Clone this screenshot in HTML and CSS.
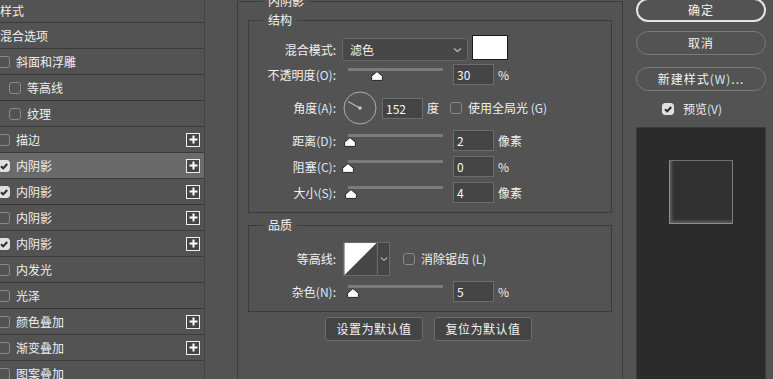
FILE: index.html
```html
<!DOCTYPE html>
<html lang="zh-CN">
<head>
<meta charset="utf-8">
<title>图层样式</title>
<link rel="stylesheet" href="styles.css">
</head>
<body>
<div class="dialog">
  <aside class="sidebar">
    <div class="row first">样式</div>
    <div class="row">混合选项</div>
    <div class="row"><span class="cb"></span>斜面和浮雕</div>
    <div class="row sub"><span class="cb"></span>等高线</div>
    <div class="row sub"><span class="cb"></span>纹理</div>
    <div class="row"><span class="cb"></span>描边<span class="plus"><svg viewBox="0 0 11 11"><path d="M5.5 1.5v8M1.5 5.5h8"/></svg></span></div>
    <div class="row sel"><span class="cb on"><svg viewBox="0 0 10 10"><path d="M2 5.2l2.2 2.2L8.2 3"/></svg></span>内阴影<span class="plus"><svg viewBox="0 0 11 11"><path d="M5.5 1.5v8M1.5 5.5h8"/></svg></span></div>
    <div class="row"><span class="cb on"><svg viewBox="0 0 10 10"><path d="M2 5.2l2.2 2.2L8.2 3"/></svg></span>内阴影<span class="plus"><svg viewBox="0 0 11 11"><path d="M5.5 1.5v8M1.5 5.5h8"/></svg></span></div>
    <div class="row"><span class="cb"></span>内阴影<span class="plus"><svg viewBox="0 0 11 11"><path d="M5.5 1.5v8M1.5 5.5h8"/></svg></span></div>
    <div class="row"><span class="cb on"><svg viewBox="0 0 10 10"><path d="M2 5.2l2.2 2.2L8.2 3"/></svg></span>内阴影<span class="plus"><svg viewBox="0 0 11 11"><path d="M5.5 1.5v8M1.5 5.5h8"/></svg></span></div>
    <div class="row"><span class="cb"></span>内发光</div>
    <div class="row"><span class="cb"></span>光泽</div>
    <div class="row"><span class="cb"></span>颜色叠加<span class="plus"><svg viewBox="0 0 11 11"><path d="M5.5 1.5v8M1.5 5.5h8"/></svg></span></div>
    <div class="row"><span class="cb"></span>渐变叠加<span class="plus"><svg viewBox="0 0 11 11"><path d="M5.5 1.5v8M1.5 5.5h8"/></svg></span></div>
    <div class="row"><span class="cb"></span>图案叠加</div>
  </aside>

  <main class="center">
    <fieldset class="group outer">
      <legend>内阴影</legend>

      <fieldset class="group structure">
        <legend>结构</legend>
        <div class="frow r-blend">
          <label class="lbl">混合模式:</label>
          <div class="select">滤色<svg class="chev" viewBox="0 0 9 6"><path d="M1 1.5l3.5 3 3.5-3"/></svg></div>
          <span class="swatch"></span>
        </div>
        <div class="frow r-opacity">
          <label class="lbl">不透明度<span class="hk">(O)</span>:</label>
          <div class="slider"><div class="track"><span class="thumb" style="left:22.5px"><svg viewBox="0 0 12 10"><path d="M6 0.6L11.4 5.2V9.4H0.6V5.2Z"/></svg></span></div></div>
          <span class="num">30</span><span class="unit">%</span>
        </div>
        <div class="frow r-angle">
          <label class="lbl">角度<span class="hk">(A)</span>:</label>
          <svg class="dial" viewBox="0 0 34 34"><circle cx="17" cy="17" r="16"/><path d="M17 17L5 10.6"/><circle class="dot" cx="17" cy="17" r="1.8"/></svg>
          <span class="num angle-num">152</span><span class="unit">度</span>
          <span class="cb inline"></span><span class="cbtext">使用全局光 <span class="hk">(G)</span></span>
        </div>
        <div class="frow r-slide">
          <label class="lbl">距离<span class="hk">(D)</span>:</label>
          <div class="slider"><div class="track"><span class="thumb" style="left:-4px"><svg viewBox="0 0 12 10"><path d="M6 0.6L11.4 5.2V9.4H0.6V5.2Z"/></svg></span></div></div>
          <span class="num">2</span><span class="unit">像素</span>
        </div>
        <div class="frow r-slide">
          <label class="lbl">阻塞<span class="hk">(C)</span>:</label>
          <div class="slider"><div class="track"><span class="thumb" style="left:-6px"><svg viewBox="0 0 12 10"><path d="M6 0.6L11.4 5.2V9.4H0.6V5.2Z"/></svg></span></div></div>
          <span class="num">0</span><span class="unit">%</span>
        </div>
        <div class="frow r-slide">
          <label class="lbl">大小<span class="hk">(S)</span>:</label>
          <div class="slider"><div class="track"><span class="thumb" style="left:-3px"><svg viewBox="0 0 12 10"><path d="M6 0.6L11.4 5.2V9.4H0.6V5.2Z"/></svg></span></div></div>
          <span class="num">4</span><span class="unit">像素</span>
        </div>
      </fieldset>

      <fieldset class="group quality">
        <legend>品质</legend>
        <div class="frow r-contour">
          <label class="lbl">等高线:</label>
          <div class="contour">
            <svg class="curve" viewBox="0 0 34 34"><rect width="34" height="34" fill="#474747"/><path d="M0 0H34L0 34Z" fill="#ffffff"/></svg>
            <span class="drop"><svg class="chev" viewBox="0 0 9 6"><path d="M1 1.5l3.5 3 3.5-3"/></svg></span>
          </div>
          <span class="cb inline aa"></span><span class="cbtext">消除锯齿 <span class="hk">(L)</span></span>
        </div>
        <div class="frow r-noise">
          <label class="lbl">杂色<span class="hk">(N)</span>:</label>
          <div class="slider"><div class="track"><span class="thumb" style="left:-1.5px"><svg viewBox="0 0 12 10"><path d="M6 0.6L11.4 5.2V9.4H0.6V5.2Z"/></svg></span></div></div>
          <span class="num">5</span><span class="unit">%</span>
        </div>
      </fieldset>

      <div class="defaults">
        <button class="dbtn">设置为默认值</button>
        <button class="dbtn">复位为默认值</button>
      </div>
    </fieldset>
  </main>

  <aside class="actions">
    <button class="pill primary">确定</button>
    <button class="pill">取消</button>
    <button class="pill">新建样式<span class="hk">(W)</span>...</button>
    <div class="preview-toggle"><span class="cb on"><svg viewBox="0 0 10 10"><path d="M2 5.2l2.2 2.2L8.2 3"/></svg></span>预览<span class="hk">(V)</span></div>
    <div class="preview"><div class="sample"></div></div>
  </aside>
</div>
</body>
</html>
```

FILE: styles.css
```css
* { box-sizing: border-box; }
html, body { margin: 0; padding: 0; }
body {
  background: #535353;
  color: #eeeeee;
  font-family: "Noto Sans CJK SC", "Noto Sans", sans-serif;
  font-size: 12px;
  line-height: 16px;
  width: 773px;
  height: 379px;
  overflow: hidden;
}
.hk { color: #d6e6fb; }

.dialog { display: flex; align-items: flex-start; height: 379px; }

/* ---------- sidebar ---------- */
.sidebar {
  width: 205px;
  flex: none;
  height: 379px;
  border-right: 1px solid #424242;
}
.row {
  display: flex;
  align-items: center;
  height: 26px;
  border-bottom: 1px solid #3a3a3a;
  padding-right: 4px;
  white-space: nowrap;
}
.row.first { height: 23px; }
.row.sel { background: #6a6a6a; }

.cb {
  width: 12px;
  height: 12px;
  flex: none;
  border: 1.5px solid #8a8a8a;
  border-radius: 3px;
  margin-left: -2px;
  margin-right: 6px;
  display: flex;
  align-items: center;
  justify-content: center;
}
.row.sub .cb { margin-left: 9px; }
.cb.on { background: #e0e0e0; border-color: #e0e0e0; }
.cb svg { width: 10px; height: 10px; }
.cb svg path { fill: none; stroke: #2b2b2b; stroke-width: 2; }

.plus {
  margin-left: auto;
  width: 14px;
  height: 14px;
  border: 1.5px solid #f0f0f0;
  background: #454545;
  display: flex;
  align-items: center;
  justify-content: center;
}
.plus svg { width: 11px; height: 11px; }
.plus svg path { stroke: #ffffff; stroke-width: 2; fill: none; }

/* ---------- center ---------- */
.center { flex: none; margin-left: 32px; width: 386px; }
.group {
  margin: 0;
  padding: 0;
  border: 1px solid #3c3c3c;
  min-width: 0;
}
.group > legend {
  padding: 0 5px;
  margin-left: 14px;
  line-height: 14px;
  color: #f2f2f2;
}
.outer {
  margin-top: -6px;
  padding: 0 10px;
  height: 420px;
  border-bottom: none;
}
.outer > legend { margin-left: 15px; }
.structure { margin-top: 5px; padding: 11px 0 9px; }
.quality { margin-top: 5px; padding: 10px 0 9px; }

.frow { display: flex; align-items: center; white-space: nowrap; }
.lbl { width: 87px; flex: none; text-align: right; margin-right: 6px; color: #f0f0f0; }

.r-blend { height: 23px; }
.r-opacity { height: 21px; margin-top: 3px; }
.r-angle { height: 34px; margin-top: 6px; }
.r-slide { height: 21px; margin-top: 5px; }
.r-contour { height: 34px; }
.r-noise { height: 21px; margin-top: 5px; }

.select {
  width: 126px;
  height: 23px;
  background: #474747;
  border: 1px solid #686868;
  border-radius: 3px;
  padding-left: 7px;
  display: flex;
  align-items: center;
  color: #f0f0f0;
}
.chev { width: 9px; height: 6px; }
.chev path { fill: none; stroke: #bdbdbd; stroke-width: 1.2; }
.select .chev { margin-left: auto; margin-right: 5px; }
.swatch {
  width: 36px;
  height: 25px;
  margin-left: 4px;
  margin-top: -5px;
  background: #ffffff;
  border: 1px solid #1a1a1a;
}

.slider { width: 107px; padding: 0 6px; height: 13px; margin-top: -1px; }
.track { position: relative; height: 3px; background: #7b7b7b; }
.thumb { position: absolute; top: 3px; width: 12px; height: 10px; display: block; }
.thumb svg { display: block; width: 12px; height: 10px; }
.thumb svg path { fill: #ffffff; stroke: #262626; stroke-width: 1; stroke-linejoin: round; }

.num {
  width: 41px;
  height: 21px;
  flex: none;
  margin-left: 4px;
  background: #444444;
  border: 1px solid #6c6c6c;
  padding-left: 3px;
  line-height: 19px;
  color: #f4f6ff;
}
.unit { margin-left: 4px; color: #f0f0f0; }

.dial { width: 34px; height: 34px; margin-left: 1px; flex: none; }
.dial circle { fill: none; stroke: #aeaeae; stroke-width: 1; }
.dial path { stroke: #bcbcbc; stroke-width: 1.1; }
.dial .dot { fill: #c8c8c8; stroke: none; }
.angle-num { margin-left: 5px; }

.cb.inline { margin-left: 11px; }
.cb.aa { margin-left: 13px; }
.cbtext { color: #f0f0f0; }

.contour {
  display: flex;
  height: 34px;
  margin-left: 1px;
  border: 1px solid #6a6a6a;
}
.curve { width: 33px; height: 32px; display: block; }
.drop {
  width: 12px;
  background: #464646;
  border-left: 1px solid #6a6a6a;
  display: flex;
  align-items: center;
  justify-content: center;
}
.drop .chev { width: 8px; }

.defaults { display: flex; justify-content: flex-start; gap: 11px; margin-top: 5px; padding-left: 77px; }
.dbtn {
  width: 98px;
  height: 24px;
  background: #444444;
  border: 1px solid #6c6c6c;
  border-radius: 3px;
  color: #f2f2f2;
  font: inherit;
  padding: 0;
  letter-spacing: 0.5px;
}

/* ---------- right ---------- */
.actions { flex: none; width: 130px; margin-left: 13px; display: flex; flex-direction: column; }
.pill {
  height: 24px;
  width: 130px;
  border: 1px solid #7a7a7a;
  border-radius: 12px;
  background: transparent;
  color: #f2f2f2;
  font: inherit;
  letter-spacing: 1px;
  padding: 0;
}
.pill.primary { margin-top: -2px; border: 2px solid #e4e4e4; }
.pill + .pill { margin-top: 9px; }
.pill + .pill + .pill { margin-top: 12px; }
.preview-toggle {
  display: flex;
  align-items: center;
  margin-top: 12px;
  padding-left: 26px;
  height: 12px;
  color: #f0f0f0;
}
.preview-toggle .cb { margin-left: 0; margin-right: 9px; }
.preview {
  margin-top: 12px;
  height: 260px;
  background: #2b2b2b;
  border: 1px solid #3c3c3c;
  padding-top: 32px;
  display: flex;
  justify-content: center;
  align-items: flex-start;
}
.sample {
  width: 64px;
  height: 64px;
  background: #313131;
  border: 1px solid #8e8e8e;
  border-top-color: #6e6e6e;
  border-right-color: #7c7c7c;
  box-shadow: inset 2px -2px 3px rgba(255,255,255,0.22);
}
```
